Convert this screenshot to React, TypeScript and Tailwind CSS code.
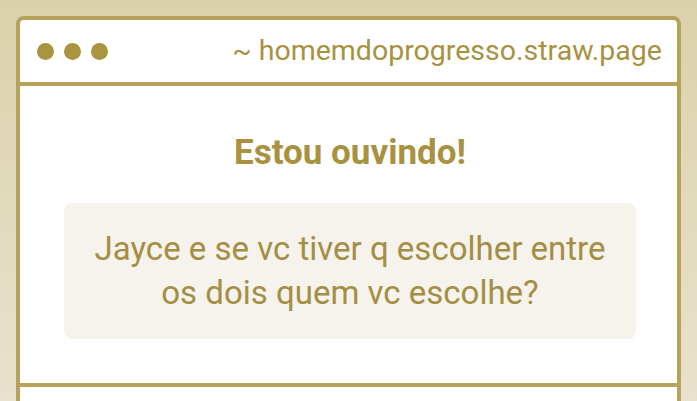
import React from 'react';

const site = 'homemdoprogresso.straw.page';
const question = 'Jayce e se vc tiver q escolher entre os dois quem vc escolhe?';

export default function App() {
  return (
    <div
      className="min-h-screen bg-gradient-to-b from-[#dad1ab] to-[#ebe6d4] p-4"
      style={{ fontFamily: 'Roboto, "Noto Sans", sans-serif' }}
    >
      <div className="overflow-hidden rounded-lg border-4 border-[#b7a25c] bg-white">
        {/* window bar */}
        <div className="flex h-[66px] items-center justify-between border-b-4 border-[#b7a25c] pl-[17px] pr-[15px]">
          <div className="flex gap-[10px]">
            <span className="size-[17px] rounded-full bg-[#ab943f]" />
            <span className="size-[17px] rounded-full bg-[#ab943f]" />
            <span className="size-[17px] rounded-full bg-[#ab943f]" />
          </div>
          <span className="text-[28.5px] leading-8 text-[#a8913f]">~ {site}</span>
        </div>

        {/* prompt */}
        <div className="border-b-4 border-[#b7a25c] pt-[47px] pr-[41px] pb-11 pl-11">
          <h1 className="text-center text-[35px] leading-10 font-bold text-[#a8913f]">Estou ouvindo!</h1>
          <div className="mt-[30px] rounded-lg bg-[#f6f3ec] px-6 py-6 text-center text-[33px] leading-[44px] text-[#a48e45]">
            {question}
          </div>
        </div>

        <div className="h-20" />
      </div>
    </div>
  );
}
